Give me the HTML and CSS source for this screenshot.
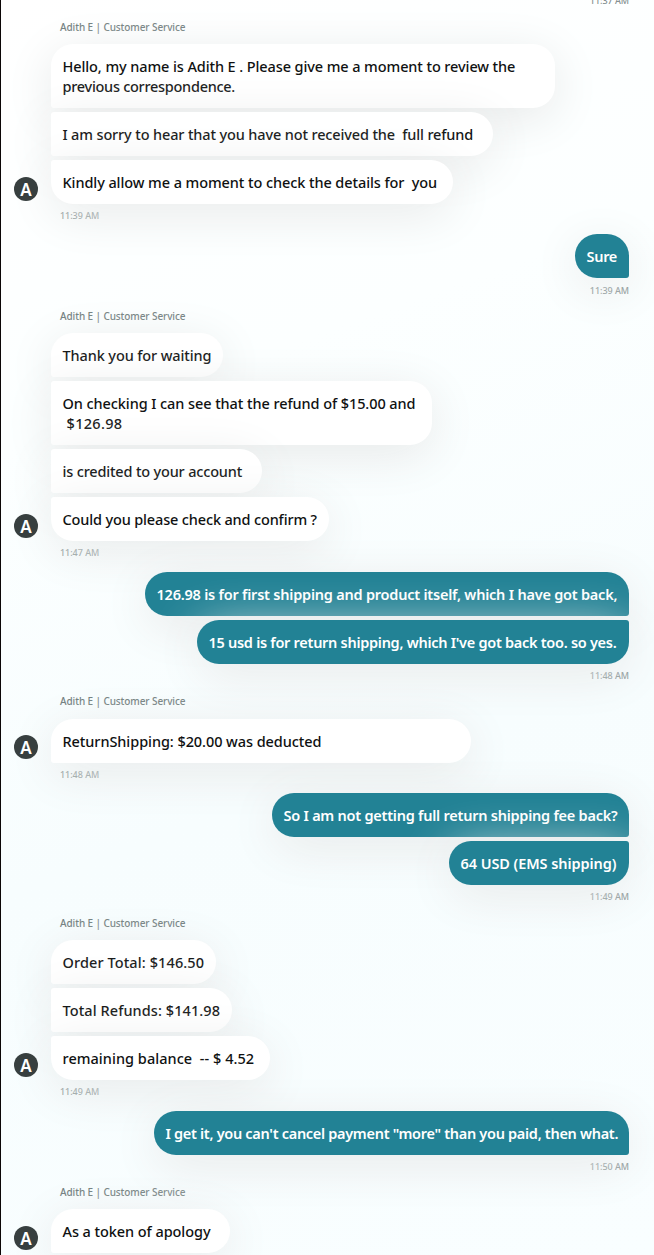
FILE: index.html
```
<!DOCTYPE html>
<html lang="en">
<head>
<meta charset="utf-8">
<title>Customer Service Chat</title>
<link rel="stylesheet" href="styles.css">
</head>
<body>
<main class="chat">
  <section class="group user clipped">
    <div class="time">11:37 AM</div>
  </section>

  <section class="group agent">
    <div class="sender">Adith E | Customer Service</div>
    <div class="stack">
      <span class="avatar">A</span>
      <div class="bubble hello">Hello, my name is Adith E . Please give me a moment to review the<br><span class="hello-end">previous correspondence.</span></div>
      <div class="bubble sorry">I am sorry to hear that you have not received the  full refund</div>
      <div class="bubble kindly">Kindly allow me a moment to check the details for  you</div>
    </div>
    <div class="time">11:39 AM</div>
  </section>

  <section class="group user">
    <div class="stack"><div class="bubble sure">Sure</div></div>
    <div class="time low">11:39 AM</div>
  </section>

  <section class="group agent">
    <div class="sender">Adith E | Customer Service</div>
    <div class="stack">
      <span class="avatar">A</span>
      <div class="bubble thanks">Thank you for waiting</div>
      <div class="bubble checking">On checking I can see that the refund of $15.00 and<br><span class="amount"> $126.98</span></div>
      <div class="bubble credited">is credited to your account</div>
      <div class="bubble confirm">Could you please check and confirm ?</div>
    </div>
    <div class="time tall">11:47 AM</div>
  </section>

  <section class="group user">
    <div class="stack">
      <div class="bubble first-shipping">126.98 is for first shipping and product itself, which I have got back,</div>
      <div class="bubble return-shipping">15 usd is for return shipping, which I've got back too. so yes.</div>
    </div>
    <div class="time">11:48 AM</div>
  </section>

  <section class="group agent">
    <div class="sender raised">Adith E | Customer Service</div>
    <div class="stack">
      <span class="avatar lifted">A</span>
      <div class="bubble deducted">ReturnShipping: $20.00 was deducted</div>
    </div>
    <div class="time">11:48 AM</div>
  </section>

  <section class="group user">
    <div class="stack">
      <div class="bubble full-fee">So I am not getting full return shipping fee back?</div>
      <div class="bubble ems">64 USD (EMS shipping)</div>
    </div>
    <div class="time">11:49 AM</div>
  </section>

  <section class="group agent">
    <div class="sender">Adith E | Customer Service</div>
    <div class="stack">
      <span class="avatar">A</span>
      <div class="bubble order">Order Total: $146.50</div>
      <div class="bubble refunds">Total Refunds: $141.98</div>
      <div class="bubble balance">remaining balance  -- $ 4.52</div>
    </div>
    <div class="time tall">11:49 AM</div>
  </section>

  <section class="group user">
    <div class="stack"><div class="bubble cancel">I get it, you can't cancel payment "more" than you paid, then what.</div></div>
    <div class="time">11:50 AM</div>
  </section>

  <section class="group agent">
    <div class="sender raised short">Adith E | Customer Service</div>
    <div class="stack">
      <span class="avatar">A</span>
      <div class="bubble apology">As a token of apology</div>
    </div>
  </section>
</main>
</body>
</html>
```
FILE: styles.css
```
* { box-sizing: border-box; }

html, body { height: 100%; margin: 0; }

body {
  overflow: hidden;
  font-family: "Noto Sans", "Open Sans", sans-serif;
}

.chat {
  height: 1255px;
  overflow: hidden;
  padding: 0 25px 0 50px;
  border-left: 1px solid #0b0606;
  background: linear-gradient(160deg, #ffffff 0%, #fcffff 30%, #f7fdfe 60%, #f9feff 100%);
}

.group { display: flex; flex-direction: column; }

.stack {
  position: relative;
  display: flex;
  flex-direction: column;
  align-items: flex-start;
  gap: 4px;
}

.user .stack { align-items: flex-end; }

.sender {
  height: 25px;
  padding-left: 9px;
  color: #6c7979;
  font-size: 10px;
  font-weight: 500;
  letter-spacing: -.1px;
  line-height: 16px;
  white-space: pre;
}

.raised { line-height: 14px; }
.short { height: 24px; }

.time {
  height: 30px;
  padding: 5px 0 0 9px;
  color: #849090;
  font-size: 9px;
  font-weight: 500;
  letter-spacing: -.04px;
  line-height: 14px;
}

.low { padding-top: 6px; }
.tall { height: 31px; }

.user .time { text-align: right; }

.clipped .time { height: 19px; padding: 0; line-height: 1px; }

.bubble {
  flex: none;
  min-height: 44px;
  padding: 12px 0 12px 11.5px;
  border-radius: 3px 22px 22px 3px;
  background: #fff;
  box-shadow: 0 10px 50px #e7e9e9;
  color: #0f1111;
  font-size: 14.5px;
  font-weight: 500;
  line-height: 20px;
  white-space: pre;
}

.agent .bubble:nth-child(2) { border-top-left-radius: 22px; }
.agent .kindly, .agent .confirm, .agent .balance { border-bottom-left-radius: 22px; }

.user .bubble {
  border-radius: 22px 3px 3px 22px;
  background: #228295;
  color: #fff;
  font-weight: 600;
}

.user .bubble:first-child { border-top-right-radius: 22px; }
.user .return-shipping, .user .ems { border-bottom-right-radius: 22px; }

.avatar {
  position: absolute;
  left: -37px;
  bottom: 3px;
  width: 24px;
  height: 24px;
  border-radius: 50%;
  background: #373f3f;
  color: #fff;
  font-size: 17px;
  font-weight: 600;
  line-height: 25px;
  text-align: center;
}

.lifted { bottom: 4px; }

/* Bubble widths and tracking */
.hello { width: 504px; letter-spacing: -.1px; }
.hello-end { letter-spacing: -.28px; }
.sorry { width: 442px; letter-spacing: -.14px; }
.kindly { width: 402px; letter-spacing: -.085px; }
.thanks { width: 172px; letter-spacing: -.11px; }
.checking { width: 381px; letter-spacing: -.08px; }
.amount { letter-spacing: .3px; }
.credited { width: 211px; letter-spacing: -.18px; }
.confirm { width: 278px; letter-spacing: -.15px; }
.deducted { width: 420px; letter-spacing: -.07px; }
.order { width: 165px; letter-spacing: .1px; }
.refunds { width: 181px; letter-spacing: .08px; }
.balance { width: 219px; letter-spacing: .04px; }
.apology { width: 179px; letter-spacing: -.07px; }
.sure { width: 54px; letter-spacing: -.3px; }
.first-shipping { width: 484px; letter-spacing: -.22px; }
.return-shipping { width: 432px; letter-spacing: -.28px; }
.full-fee { width: 357px; letter-spacing: -.24px; }
.ems { width: 180px; letter-spacing: -.07px; }
.cancel { width: 475px; letter-spacing: -.3px; }
```
